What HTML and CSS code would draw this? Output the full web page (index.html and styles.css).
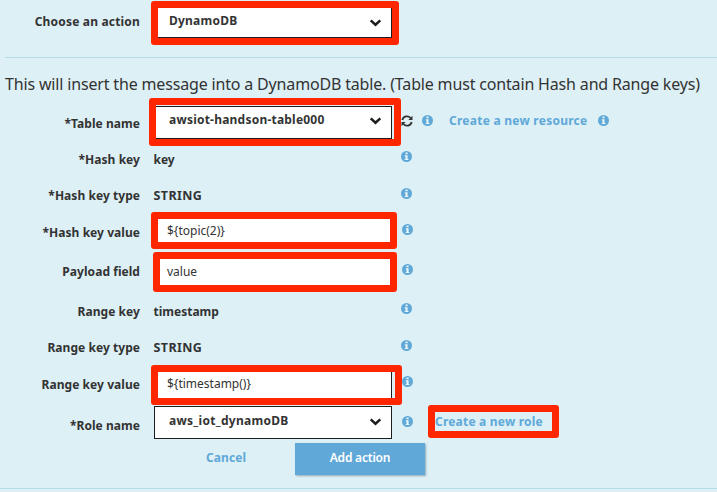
FILE: index.html
```html
<!DOCTYPE html>
<html lang="en">
<head>
<meta charset="utf-8">
<title>Add action</title>
<link rel="stylesheet" href="styles.css">
</head>
<body>
<svg class="sprite" width="0" height="0">
  <symbol id="info" viewBox="0 0 11 11"><circle cx="5.5" cy="5.5" r="5.5" fill="#5fa8d8"/><path d="M4.5 1.6h2.1v1.6H4.5zM3.8 4.2h2.8v3.7h.8v1.2H3.7V7.9h.8V5.4h-.7z" fill="#e6f4f8"/></symbol>
  <symbol id="chevron" viewBox="0 0 12 8"><path d="M1.2 1.3 6 5.7l4.8-4.4" fill="none" stroke="#1d1d1d" stroke-width="2.5"/></symbol>
  <symbol id="refresh" viewBox="0 0 12 12"><path d="M1.3 5A4.8 4.8 0 0 1 9.6 3M10.7 7A4.8 4.8 0 0 1 2.4 9" fill="none" stroke="#333" stroke-width="1.8"/><path d="M11.5.8V5H7.3zM.5 11.2V7h4.2z" fill="#333"/></symbol>
</svg>
<main class="panel">
  <section class="row action">
    <label class="label">Choose an action</label>
    <div class="field"><div class="select"><span>DynamoDB</span><svg class="chevron"><use href="#chevron"/></svg></div><i class="mark mark-action"></i></div>
  </section>
  <p class="intro">This will insert the message into a DynamoDB table. (Table must contain Hash and Range keys)</p>
  <section class="form">
    <div class="row table">
      <label class="label">*Table name</label>
      <div class="field"><div class="select"><span>awsiot-handson-table000</span><svg class="chevron"><use href="#chevron"/></svg></div><i class="mark mark-table"></i></div>
      <div class="aside"><svg class="refresh"><use href="#refresh"/></svg><svg class="info"><use href="#info"/></svg><a class="link resource">Create a new resource</a><svg class="info"><use href="#info"/></svg></div>
    </div>
    <div class="row plain"><label class="label">*Hash key</label><div class="field">key</div><div class="aside"><svg class="info"><use href="#info"/></svg></div></div>
    <div class="row plain low"><label class="label">*Hash key type</label><div class="field caps">STRING</div><div class="aside"><svg class="info"><use href="#info"/></svg></div></div>
    <div class="row hash-value"><label class="label">*Hash key value</label><div class="field"><div class="input">${topic(2)}</div><i class="mark mark-hash"></i></div><div class="aside"><svg class="info"><use href="#info"/></svg></div></div>
    <div class="row payload"><label class="label">Payload field</label><div class="field"><div class="input">value</div><i class="mark mark-payload"></i></div><div class="aside"><svg class="info"><use href="#info"/></svg></div></div>
    <div class="row plain"><label class="label">Range key</label><div class="field">timestamp</div><div class="aside"><svg class="info"><use href="#info"/></svg></div></div>
    <div class="row plain low"><label class="label">Range key type</label><div class="field caps">STRING</div><div class="aside"><svg class="info"><use href="#info"/></svg></div></div>
    <div class="row range-value"><label class="label">Range key value</label><div class="field"><div class="input">${timestamp()}</div><i class="mark mark-range"></i></div><div class="aside"><svg class="info"><use href="#info"/></svg></div></div>
    <div class="row role">
      <label class="label">*Role name</label>
      <div class="field"><div class="select"><span>aws_iot_dynamoDB</span><svg class="chevron"><use href="#chevron"/></svg></div></div>
      <div class="aside"><svg class="info"><use href="#info"/></svg><a class="link new-role">Create a new role<i class="mark mark-role"></i></a></div>
    </div>
  </section>
  <footer class="buttons"><a class="link cancel">Cancel</a><button class="submit">Add action</button></footer>
</main>
</body>
</html>
```
FILE: styles.css
```css
* { box-sizing: border-box; }
body { margin: 0; background: #ddf0f6; color: #333; font: bold 12px/16px "Noto Sans", sans-serif; overflow: hidden; }
.sprite { position: absolute; }
.panel { height: 489px; border-bottom: 1px solid #b3dbe9; white-space: nowrap; }
.row { display: grid; grid-template-columns: 140px 238px auto; column-gap: 14px; align-items: center; justify-content: start; }
.label { text-align: right; letter-spacing: .05px; }
.action .label { letter-spacing: .18px; }
.table .label, .hash-value .label { padding-top: 2px; }
.role .label { padding-top: 6px; }
.field { position: relative; }
.plain .field { left: -.5px; }
.caps { font-size: 12.5px; letter-spacing: .4px; }
.action { height: 58px; margin-left: 5px; padding-bottom: 14px; grid-template-columns: 135px 238px; border-bottom: 1px solid #b3dbe9; }
.intro { margin: 0 0 0 5px; height: 46px; padding-top: 13px; font-size: 16px; line-height: 26px; font-weight: 400; letter-spacing: -.165px; }
.form { display: grid; grid-template-rows: 38px 36px 36px 36px 44px 36px 36px 38px 37px; }
.select { height: 33px; border: 1px solid #1d1d1d; background: #fff; display: flex; align-items: center; justify-content: space-between; padding: 0 9px 3px 14px; letter-spacing: .22px; }
.role .select { letter-spacing: .28px; }
.action .select { padding-bottom: 1px; }
.action .select span { padding-bottom: 1px; }
.table .field { padding-bottom: 2px; }
.table .select { padding-bottom: 4px; }
.chevron { width: 13px; height: 8px; margin-top: 3px; }
.role .chevron { margin-top: 1px; }
.table .chevron { margin-top: 2px; }
.input { height: 32px; border: 1px solid #1d1d1d; background: #fff; padding: 0 12px; font-weight: 400; line-height: 28px; }
.payload .input { line-height: 29px; }
.range-value .input { line-height: 27px; }
.aside { display: flex; align-items: center; margin-left: -5px; padding-bottom: 5px; }
.plain .aside { margin-left: -5px; padding-bottom: 7px; }
.plain.low .aside { padding-bottom: 5px; }
.hash-value .aside, .payload .aside, .range-value .aside, .role .aside { margin-left: -4px; }
.range-value .aside { padding-bottom: 7px; }
.role .aside { padding-bottom: 2px; }
.info { width: 11px; height: 11px; flex: none; display: block; }
.refresh { width: 12px; height: 12px; margin-right: 9px; }
.link { color: #5fa8d8; position: relative; letter-spacing: .25px; }
.resource { margin: 0 11px 0 16px; width: 138px; }
.new-role { margin-left: 22px; letter-spacing: .2px; }
.buttons { display: flex; align-items: center; margin-top: 2px; padding-left: 206px; height: 32px; }
.cancel { width: 89px; padding-bottom: 2px; letter-spacing: .1px; }
.submit { width: 130px; height: 32px; border: 0; background: #5fa8d8; color: #fff; font: inherit; font-weight: 600; padding: 0 0 2px; letter-spacing: -.2px; box-shadow: 1px 1px 2px #8fa9b5; }
.mark { position: absolute; z-index: 1; border: 7px solid #ff2600; border-radius: 3px; pointer-events: none; }
.mark-action { left: -3px; top: -4px; width: 248px; height: 44px; }
.mark-table { left: -5px; top: -8px; width: 252px; height: 48px; }
.mark-hash { left: -3px; top: -4px; width: 246px; height: 37px; }
.mark-payload { left: -1px; top: -4px; width: 244px; height: 40px; }
.mark-range { left: -3px; top: -4px; width: 251px; height: 40px; }
.mark-role { left: -7px; top: -9px; width: 131px; height: 33px; }
```
